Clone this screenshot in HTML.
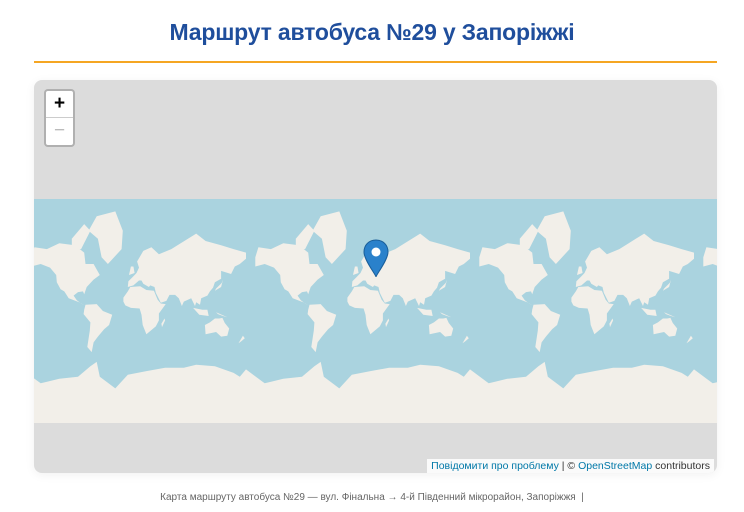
<!DOCTYPE html>
<html><head><meta charset="utf-8"><style>
body{margin:0;background:#fff;width:744px;height:512px;overflow:hidden;font-family:"Liberation Sans",sans-serif}
h1{position:absolute;top:19px;left:0;width:744px;text-align:center;margin:0;font-size:23px;font-weight:bold;color:#1f4e9c;letter-spacing:-0.2px}
.rule{position:absolute;left:34px;top:61px;width:683px;height:2px;background:#f5a623}
.map{position:absolute;left:34px;top:80px;width:683px;height:393px;background:#dcdcdc;border-radius:8px;overflow:hidden;box-shadow:0 2px 10px rgba(0,0,0,.06)}
.zoom{position:absolute;left:10px;top:9px;width:27px;height:54px;background:#fff;border:2px solid rgba(0,0,0,.2);border-radius:4px;background-clip:padding-box}
.zoom div{height:26px;line-height:26px;text-align:center;font-size:19px;font-weight:bold;color:#000}
.zoom div+div{border-top:1px solid #ccc;color:#bbb;font-weight:normal}
.attr{position:absolute;right:3px;bottom:0;background:rgba(255,255,255,.85);font-size:10.5px;padding:1px 4px;color:#333}
.attr a{color:#0078a8;text-decoration:none}
.cap{position:absolute;top:492px;left:0;width:744px;text-align:center;font-size:10px;color:#666}
</style></head><body>
<h1>Маршрут автобуса №29 у Запоріжжі</h1>
<div class="rule"></div>
<div class="map">
<svg id="w" width="683" height="393" style="position:absolute;left:0;top:0"></svg>
<div class="zoom"><div>+</div><div>−</div></div>
<svg width="26" height="40" style="position:absolute;left:329px;top:159px" viewBox="0 0 26 40"><path d="M13 1C6 1 1 6 1 13c0 8 12 23 12 25 0-2 12-17 12-25C25 6 20 1 13 1z" fill="#2a81cb" stroke="#1a5e99" stroke-width="1"/><circle cx="13" cy="13" r="4.5" fill="#fff"/></svg>
<div class="attr"><a>Повідомити про проблему</a> | © <a>OpenStreetMap</a> contributors</div>
</div>
<div class="cap">Карта маршруту автобуса №29 — вул. Фінальна → 4-й Південний мікрорайон, Запоріжжя &nbsp;|</div>
<script>
var S=224,T=119,O=[212-S,212,212+S,212+2*S];
function P(lon,lat){var x=(lon+180)/360*S;var r=lat*Math.PI/180;var y=(0.5-Math.log(Math.tan(Math.PI/4+r/2))/(2*Math.PI))*S;return [x,Math.min(S,Math.max(0,y))];}
var L=[
[[-165,65],[-160,71],[-140,70],[-120,73],[-95,72],[-80,68],[-78,60],[-65,60],[-55,50],[-65,45],[-76,36],[-80,26],[-82,30],[-90,29],[-97,24],[-92,17],[-85,12],[-78,8],[-88,14],[-105,20],[-112,30],[-118,33],[-124,42],[-125,50],[-135,57],[-150,60],[-165,58]],
[[-73,78],[-60,82],[-30,83],[-18,78],[-20,70],[-42,60],[-52,65],[-58,75]],
[[-100,75],[-80,80],[-70,78],[-85,70],[-100,70]],
[[-78,10],[-60,11],[-50,0],[-35,-6],[-40,-22],[-48,-28],[-58,-38],[-65,-45],[-68,-55],[-75,-50],[-71,-30],[-70,-18],[-81,-5],[-80,2]],
[[-10,36],[-9,43],[-2,48],[4,52],[8,57],[5,62],[15,69],[28,71],[40,67],[60,70],[75,73],[100,77],[115,74],[140,72],[160,70],[180,68],[180,64],[170,60],[162,58],[156,51],[140,54],[140,46],[130,42],[127,35],[122,30],[118,24],[108,20],[106,10],[100,14],[98,8],[92,20],[80,15],[77,8],[72,20],[66,25],[57,25],[52,16],[43,13],[35,28],[33,36],[26,38],[24,36],[15,40],[12,44],[8,44],[-1,38]],
[[-17,21],[-10,30],[-6,36],[10,37],[20,32],[32,31],[38,18],[43,12],[51,11],[40,-4],[40,-15],[35,-24],[20,-35],[14,-22],[12,-6],[9,4],[-5,5],[-14,9],[-17,15]],
[[114,-22],[122,-18],[130,-12],[137,-12],[142,-11],[146,-19],[153,-27],[150,-37],[140,-38],[132,-32],[115,-35]],
[[-8,50],[-5,58],[-1,58],[1,52]],
[[130,31],[132,34],[141,41],[143,45],[140,36]],
[[95,5],[105,-6],[120,-8],[118,2],[110,2]],
[[132,-2],[150,-10],[143,-8],[135,-5]],
[[45,-25],[50,-15],[49,-12],[44,-20]],
[[168,-46],[175,-37],[178,-40],[172,-44]]
];
var ant=[[-180,-68],[-150,-75],[-120,-73],[-90,-72],[-70,-66],[-60,-63],[-55,-72],[-30,-77],[-10,-71],[20,-69],[50,-67],[80,-67],[100,-65],[130,-66],[160,-70],[170,-72],[180,-68],[180,-89.9],[-180,-89.9]];
var h='<rect x="0" y="'+T+'" width="683" height="'+S+'" fill="#aad3df"/>';
O.forEach(function(o){
 L.concat([ant]).forEach(function(pl){
  var d=pl.map(function(p,i){var q=P(p[0],p[1]);return (i?'L':'M')+(q[0]+o).toFixed(1)+' '+(q[1]+T).toFixed(1);}).join('')+'Z';
  h+='<path d="'+d+'" fill="#f2efe9"/>';
 });
});
document.getElementById('w').innerHTML=h;
</script>
</body></html>
